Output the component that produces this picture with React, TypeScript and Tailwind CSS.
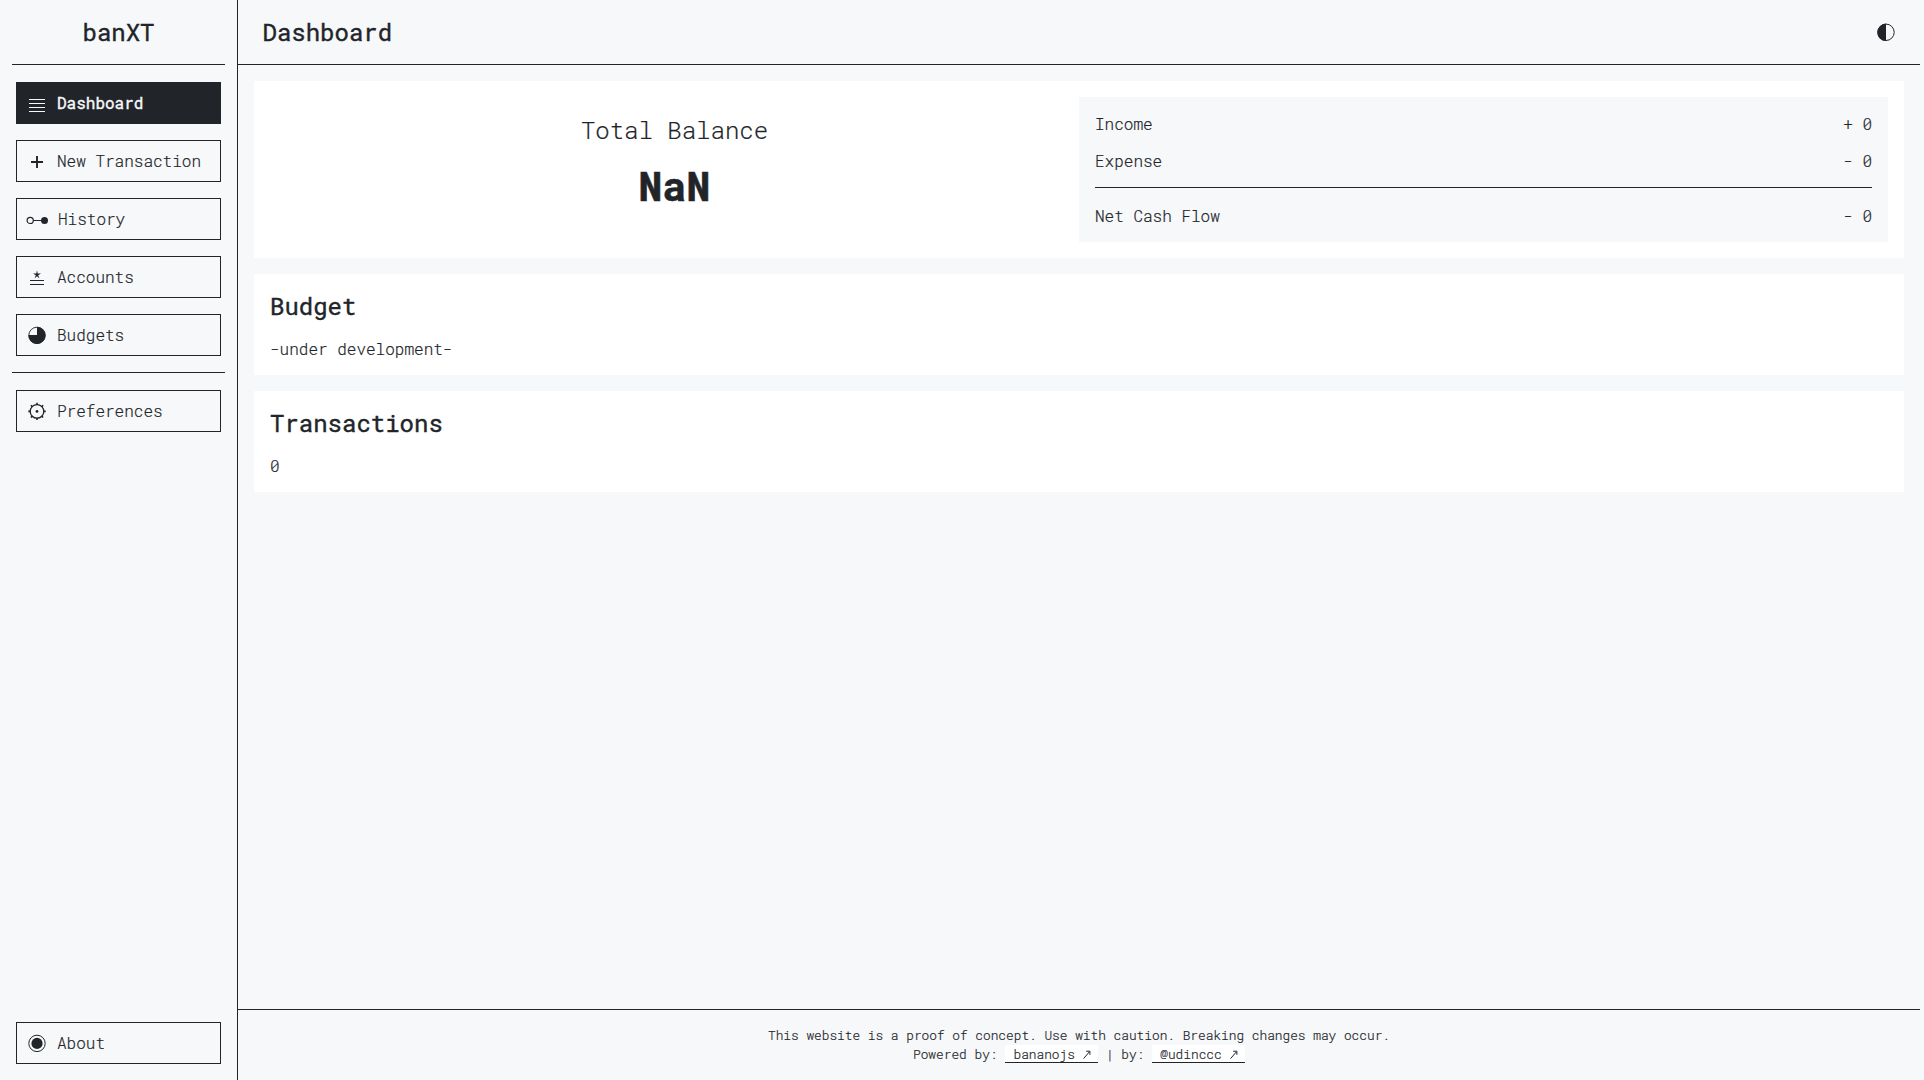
import React from "react";

const mono = 'font-["Roboto_Mono","Liberation_Mono",monospace]';

type IconName = "lines" | "plus" | "link" | "star" | "pie" | "gear" | "dot";

function Icon({ name }: { name: IconName }) {
  return (
    <svg width="22" height="20" viewBox="0 0 22 20" fill="none" stroke="currentColor" className="shrink-0">
      {name === "lines" && <path d="M3 6.5h16M3 10.5h16M3 14.5h16M3 18.5h16" />}
      {name === "plus" && <path d="M5 11h12M11 5v12" strokeWidth="1.9" />}
      {name === "link" && (
        <>
          <circle cx="4.2" cy="11.4" r="3.1" strokeWidth="1.2" />
          <path d="M7 11.5h9" />
          <circle cx="18.5" cy="11.4" r="3.5" fill="currentColor" stroke="none" />
        </>
      )}
      {name === "star" && (
        <>
          <path d="M4 13.5h14M4 17.5h14" />
          <path
            d="M11 3.2l.7 3.4h3.3l-2.8 1.6 1.3 3.4-2.5-2.3-2.5 2.3 1.3-3.4-2.8-1.6h3.3z"
            fill="currentColor"
            stroke="none"
          />
        </>
      )}
      {name === "pie" && (
        <>
          <circle cx="11" cy="10.4" r="8.2" strokeWidth=".9" />
          <path d="M11 10V1.8A8.6 8.6 0 1 1 2.4 10z" fill="currentColor" stroke="none" />
        </>
      )}
      {name === "gear" && (
        <>
          <circle cx="11" cy="10.4" r="6.8" strokeWidth="1.3" />
          <circle cx="11" cy="10.4" r="1.4" fill="currentColor" stroke="none" />
          <path
            d="M11 1.7v2.3M11 16.8v2.3M2.3 10.4h2.3M17.4 10.4h2.3M4.9 4.3l1.6 1.6M15.5 14.9l1.6 1.6M4.9 16.5l1.6-1.6M15.5 5.9l1.6-1.6"
            strokeWidth="1.6"
          />
        </>
      )}
      {name === "dot" && (
        <>
          <circle cx="11" cy="10.4" r="8.2" strokeWidth="1" />
          <circle cx="11" cy="10.4" r="5.6" fill="currentColor" stroke="none" />
        </>
      )}
    </svg>
  );
}

function NavButton({ icon, label, active = false }: { icon: IconName; label: string; active?: boolean }) {
  return (
    <button
      className={
        "flex h-[42px] w-full items-center gap-[9px] border border-[#212529] pl-[9px] text-left text-base " +
        (active
          ? "bg-[#212529] font-normal text-[#f7f8fa] [-webkit-text-stroke:0.4px]"
          : "font-light text-[#212529]")
      }
    >
      <Icon name={icon} />
      <span className={icon === "link" ? "pl-px" : ""}>{label}</span>
    </button>
  );
}

function Row({ label, value }: { label: string; value: string }) {
  return (
    <div className="flex h-[37px] items-center justify-between">
      <span>{label}</span>
      <span>{value}</span>
    </div>
  );
}

const heading = "text-2xl leading-8 font-normal [-webkit-text-stroke:0.4px]";

function FooterLink({ label }: { label: string }) {
  return (
    <a className="inline-flex h-[18px] w-[93px] items-center justify-center gap-2 border-b border-[#212529] bg-white pt-px pl-px">
      {label}
      <svg width="8" height="9" viewBox="0 0 8 9" fill="none" stroke="currentColor">
        <path d="M.6 8.6L6.4 1.8M3.2 1.2h3.7v3.6" />
      </svg>
    </a>
  );
}

export default function App() {
  return (
    <div
      className={
        "flex h-[1080px] w-full bg-[#f7f8fa] pr-1 text-base font-light text-[#212529] [-webkit-text-stroke:0.2px] " +
        mono
      }
    >
      <aside className="flex w-[238px] shrink-0 flex-col border-r border-[#212529] px-3 pb-4">
        <div className="flex h-[65px] items-center justify-center border-b border-[#212529]">
          <h1 className={heading}>banXT</h1>
        </div>
        <nav className="flex flex-col gap-4 px-1 pt-[17px]">
          <NavButton icon="lines" label="Dashboard" active />
          <NavButton icon="plus" label="New Transaction" />
          <NavButton icon="link" label="History" />
          <NavButton icon="star" label="Accounts" />
          <NavButton icon="pie" label="Budgets" />
          <div className="-mx-1 h-px bg-[#212529]" />
          <div className="pt-px">
            <NavButton icon="gear" label="Preferences" />
          </div>
        </nav>
        <div className="mt-auto px-1">
          <NavButton icon="dot" label="About" />
        </div>
      </aside>
      <div className="flex min-w-0 grow flex-col">
        <header className="flex h-[65px] shrink-0 items-center justify-between border-b border-[#212529] pr-[25px] pl-[24.5px]">
          <h2 className={heading}>Dashboard</h2>
          <svg width="18" height="18" viewBox="0 0 18 18" fill="none" stroke="currentColor">
            <circle cx="9" cy="9.3" r="8.2" />
            <path d="M9 .6a8.7 8.7 0 0 0 0 17.4z" fill="currentColor" stroke="none" />
          </svg>
        </header>
        <main className="flex grow flex-col gap-4 p-4">
          <section className="grid h-[177px] grid-cols-2 items-start bg-white p-4">
            <div className="flex flex-col items-center pt-4">
              <p className="flex h-[34px] items-center text-2xl">Total Balance</p>
              <p className="mt-[11px] text-[40px] leading-[56px] font-bold [-webkit-text-stroke:0.6px]">NaN</p>
            </div>
            <div className="h-[145px] bg-[#f7f8fa] px-4 pt-2">
              <Row label="Income" value="+ 0" />
              <Row label="Expense" value="- 0" />
              <div className="mt-2 mb-[9px] h-px bg-[#212529]" />
              <Row label="Net Cash Flow" value="- 0" />
            </div>
          </section>
          <section className="h-[101px] bg-white p-4">
            <h3 className={heading}>Budget</h3>
            <p className="mt-[15px]">-under development-</p>
          </section>
          <section className="h-[101px] bg-white p-4">
            <h3 className={heading}>Transactions</h3>
            <p className="mt-[15px]">0</p>
          </section>
        </main>
        <footer className="flex h-[71px] shrink-0 flex-col items-center border-t border-[#212529] pt-4 text-[12.8px] leading-[19px]">
          <p>This website is a proof of concept. Use with caution. Breaking changes may occur.</p>
          <p className="flex gap-[7.7px]">
            <span>Powered by:</span>
            <FooterLink label="bananojs" />
            <span>|</span>
            <span>by:</span>
            <FooterLink label="@udinccc" />
          </p>
        </footer>
      </div>
    </div>
  );
}
